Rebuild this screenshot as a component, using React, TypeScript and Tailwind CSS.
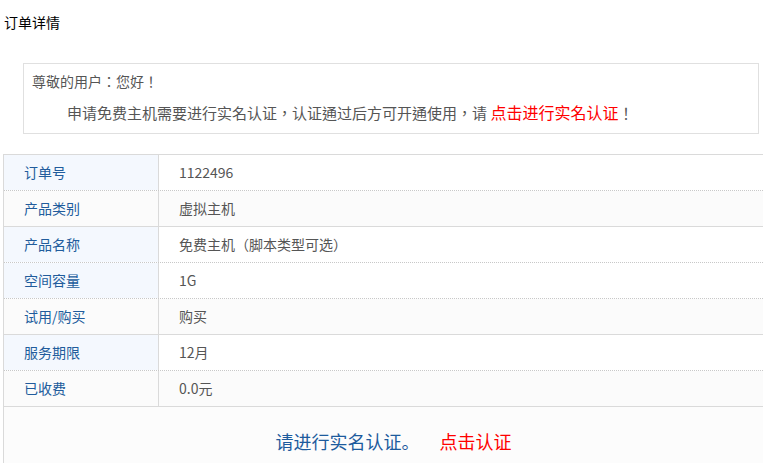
const rows = [
  { label: "订单号", value: "1122496", labelBg: "bg-[#f4f8fe]", valueBg: "bg-white", line: "border-dotted border-[#c8c8c8]" },
  { label: "产品类别", value: "虚拟主机", labelBg: "bg-[#fbfbfb]", valueBg: "bg-[#fbfbfb]", line: "border-solid border-[#dadada]" },
  { label: "产品名称", value: "免费主机（脚本类型可选）", labelBg: "bg-[#f4f8fe]", valueBg: "bg-white", line: "border-dotted border-[#c8c8c8]" },
  { label: "空间容量", value: "1G", labelBg: "bg-[#f4f8fe]", valueBg: "bg-white", line: "border-dotted border-[#c8c8c8]" },
  { label: "试用/购买", value: "购买", labelBg: "bg-[#fbfbfb]", valueBg: "bg-[#fbfbfb]", line: "border-solid border-[#dadada]" },
  { label: "服务期限", value: "12月", labelBg: "bg-[#f4f8fe]", valueBg: "bg-white", line: "border-dotted border-[#c8c8c8]" },
  { label: "已收费", value: "0.0元", labelBg: "bg-[#fbfbfb]", valueBg: "bg-[#fbfbfb]", line: "border-solid border-[#dadada]" },
]

export default function App() {
  return (
    <div
      className="w-[763px] h-[463px] overflow-hidden bg-white text-[14px]"
      style={{ fontFamily: '"Noto Sans CJK SC", "Noto Sans", sans-serif' }}
    >
      <h1 className="pl-[4px] pt-[12px] h-[20px] leading-[20px] text-[14px] font-normal text-black box-content">
        订单详情
      </h1>

      {/* notice — TC face keeps the full-width punctuation centred */}
      <div
        className="ml-[23px] mt-[31px] w-[736px] border border-[#e0e0e0] pl-[8px] pt-[5px] pb-[9px] text-[#555]"
        style={{ fontFamily: '"Noto Sans CJK TC", "Noto Sans CJK SC", sans-serif' }}
      >
        <p className="h-[24px] leading-[24px] text-[14px]">尊敬的用户：您好！</p>
        <p className="mt-[7px] h-[24px] leading-[24px] text-[15px] pl-[35px] whitespace-nowrap">
          申请免费主机需要进行实名认证，认证通过后方可开通使用，请{" "}
          <a className="text-[#ff0000] text-[16px] cursor-pointer">点击进行实名认证</a>！
        </p>
      </div>

      {/* order table */}
      <div className="ml-[3px] mt-[20px] w-[780px] border-t border-l border-[#dadada]">
        {rows.map((r) => (
          <div key={r.label} className={`flex h-[36px] border-b ${r.line}`}>
            <div
              className={`w-[155px] shrink-0 border-r border-solid border-[#dadada] pl-[20px] leading-[35px] text-[#215c9c] ${r.labelBg}`}
            >
              {r.label}
            </div>
            <div className={`flex-1 pl-[20px] leading-[35px] text-[#555] ${r.valueBg}`}>{r.value}</div>
          </div>
        ))}
        <div className="h-[80px] bg-[#fcfcfc] pt-[21px] text-center text-[18px] leading-[26px]">
          <span className="text-[#1d5b9d]">请进行实名认证。</span>
          <a className="ml-[20px] text-[#ff0000] cursor-pointer">点击认证</a>
        </div>
      </div>
    </div>
  )
}
